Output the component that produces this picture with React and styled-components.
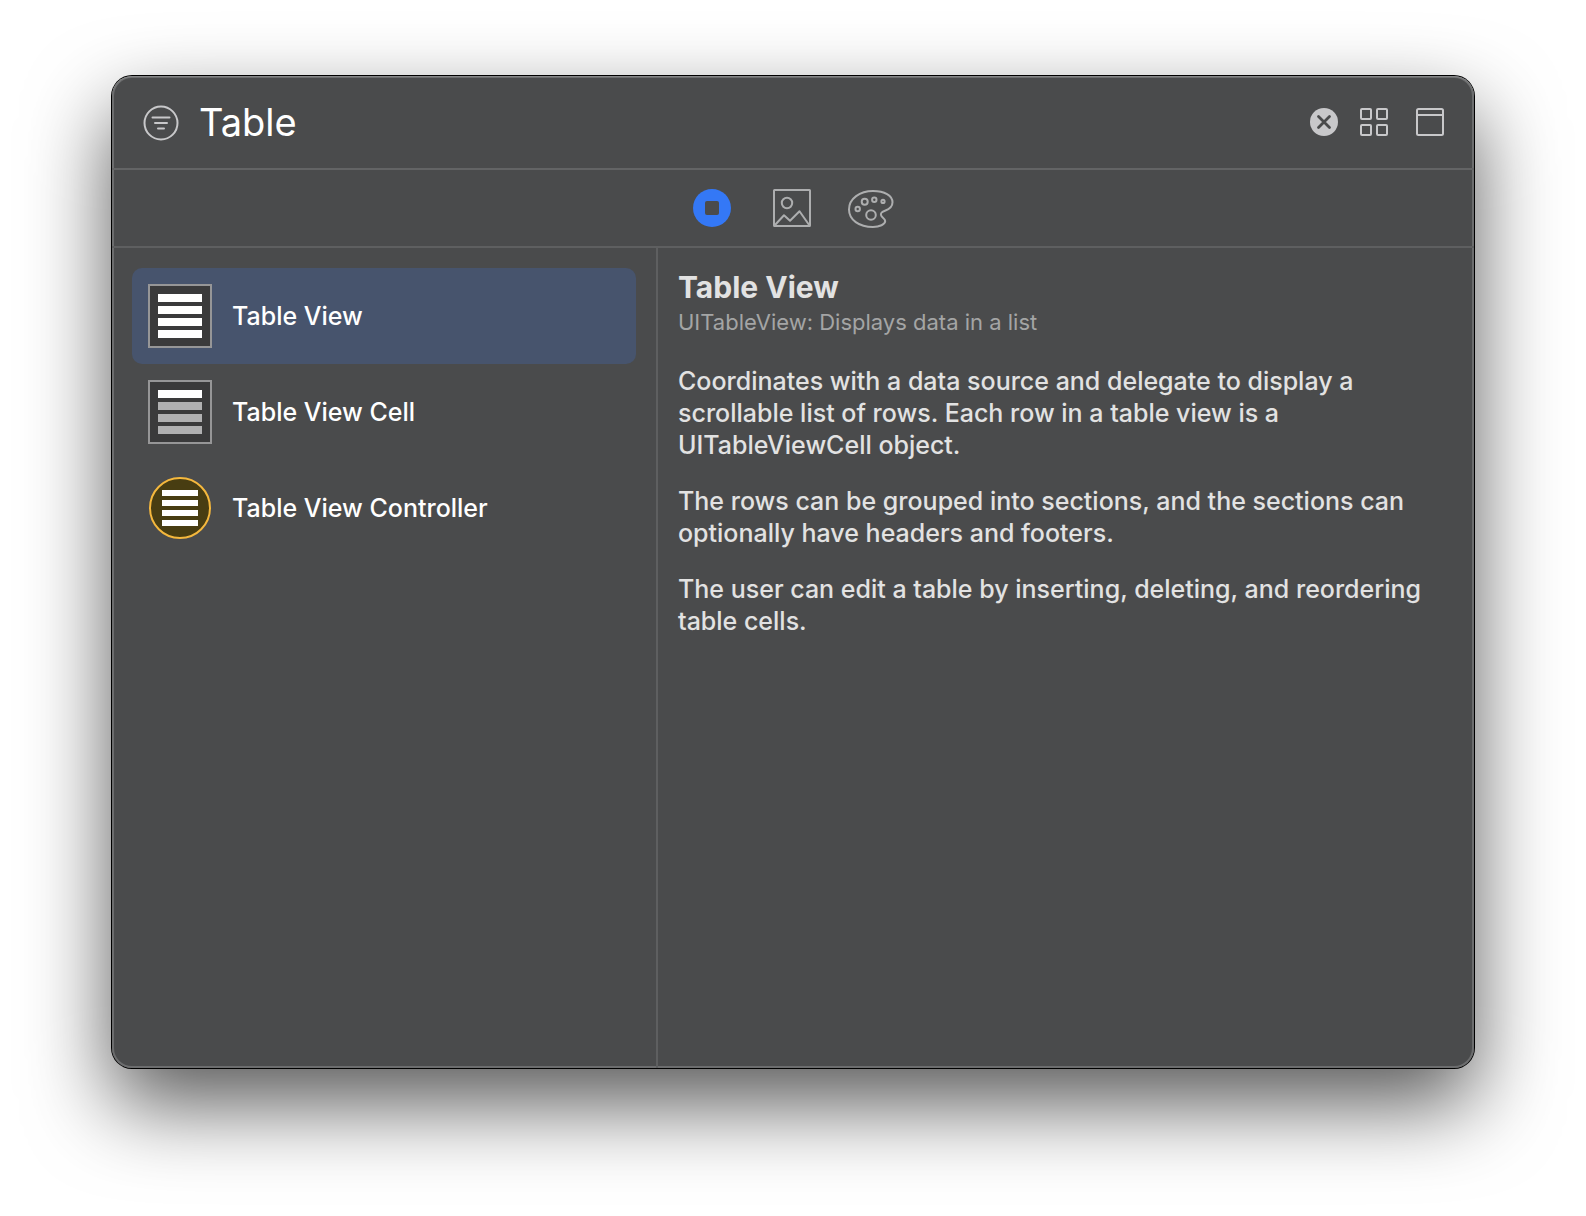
import React, { useState } from 'react';
import styled, { createGlobalStyle } from 'styled-components';

const GlobalStyle = createGlobalStyle`
  * {
    box-sizing: border-box;
  }

  body {
    margin: 0;
    background: #fff;
    font-family: Inter, 'Liberation Sans', sans-serif;
  }
`;

const Desktop = styled.div`
  display: flex;
  min-height: 100vh;
  padding: 76px 112px 148px;
  overflow: hidden;
`;

const Window = styled.main`
  flex: 1;
  min-width: 0;
  display: flex;
  flex-direction: column;
  background: #4a4b4c;
  border-radius: 20px;
  box-shadow:
    inset 0 1px 0 #858687,
    inset 0 0 0 2px #6c6d6e,
    0 0 0 1px #000,
    0 36px 84px rgba(0, 0, 0, 0.66);
`;

const SearchBar = styled.header`
  display: flex;
  align-items: center;
  height: 94px;
  padding: 0 30px 0 31px;
  border-bottom: 2px solid #636465;
`;

const IconButton = styled.button`
  display: flex;
  align-items: center;
  justify-content: center;
  flex: none;
  padding: 0;
  border: none;
  background: none;
  color: ${props => props.$color || '#c8c8ca'};
  cursor: pointer;
`;

const SearchInput = styled.input`
  flex: 1;
  min-width: 0;
  margin: 0 20px;
  padding: 0;
  border: none;
  outline: none;
  background: none;
  color: #fff;
  font-family: inherit;
  font-size: 38px;
  line-height: 48px;
`;

const SearchActions = styled.div`
  display: flex;
  align-items: center;
  gap: 22px;
`;

const ViewActions = styled.div`
  display: flex;
  gap: 28px;
`;

const LibraryTabs = styled.nav`
  display: flex;
  align-items: center;
  justify-content: center;
  gap: 32px;
  height: 78px;
  padding-right: 2px;
  border-bottom: 2px solid #5e5f60;
`;

const LibraryTab = styled(IconButton)`
  width: 48px;
  height: 48px;
`;

const Content = styled.div`
  flex: 1;
  display: grid;
  grid-template-columns: 546px 1fr;
`;

const ObjectList = styled.ul`
  margin: 0;
  padding: 20px;
  border-right: 2px solid #5e5f60;
  list-style: none;
`;

const ObjectRow = styled.button`
  display: flex;
  align-items: center;
  gap: 20px;
  width: 100%;
  height: 96px;
  padding: 0 16px;
  border: none;
  border-radius: 10px;
  background: ${props => (props.$selected ? '#47546d' : 'transparent')};
  color: #fff;
  font-family: inherit;
  font-size: 25px;
  font-weight: 500;
  text-align: left;
  cursor: pointer;
`;

const Details = styled.article`
  padding: 21px 20px;
  color: #e2e2e2;
`;

const DetailsTitle = styled.h1`
  margin: 0;
  font-size: 30px;
  font-weight: 700;
  line-height: 36px;
`;

const DetailsSubtitle = styled.p`
  margin: 0 0 26px;
  color: #a4a5a5;
  font-size: 22px;
  line-height: 34px;
`;

const Paragraph = styled.p`
  margin: 0 0 24px;
  font-size: 25px;
  font-weight: 500;
  line-height: 32px;
`;

function FilterIcon() {
  return (
    <svg width="36" height="38" viewBox="0 -2 36 38" fill="none" stroke="currentColor" strokeWidth="2" strokeLinecap="round">
      <circle cx="18" cy="18" r="16.5" />
      <path d="M9.5 12.5h17M12 18h12M15 23.5h6" />
    </svg>
  );
}

function ClearIcon() {
  return (
    <svg width="28" height="28" viewBox="0 0 28 28">
      <circle cx="14" cy="14" r="14" fill="currentColor" />
      <path d="M8.5 8.5l11 11M19.5 8.5l-11 11" stroke="#4a4b4c" strokeWidth="2.8" strokeLinecap="round" />
    </svg>
  );
}

function GridIcon() {
  return (
    <svg width="28" height="28" viewBox="0 0 28 28" fill="none" stroke="currentColor" strokeWidth="2">
      <rect x="1" y="1" width="10" height="10" rx="1" />
      <rect x="17" y="1" width="10" height="10" rx="1" />
      <rect x="1" y="17" width="10" height="10" rx="1" />
      <rect x="17" y="17" width="10" height="10" rx="1" />
    </svg>
  );
}

function PanelIcon() {
  return (
    <svg width="28" height="28" viewBox="0 0 28 28" fill="none" stroke="currentColor" strokeWidth="2">
      <rect x="1" y="1" width="26" height="26" rx="1.5" />
      <path d="M1 7h26" />
    </svg>
  );
}

function ObjectsIcon() {
  return (
    <svg width="38" height="38" viewBox="0 0 38 38">
      <circle cx="19" cy="19" r="19" fill="currentColor" />
      <rect x="12" y="12" width="14" height="14" rx="2" fill="#4a4b4c" />
    </svg>
  );
}

function MediaIcon() {
  return (
    <svg width="38" height="38" viewBox="0 0 38 38" fill="none" stroke="currentColor" strokeWidth="2" strokeLinejoin="round">
      <rect x="1" y="1" width="36" height="36" rx="0.5" />
      <circle cx="14" cy="14" r="5.2" />
      <path d="M1.5 36.5L11 26.2l6 5.6 9.500-9.600 10 14.300" />
    </svg>
  );
}

function ColorsIcon() {
  return (
    <svg width="48" height="40" viewBox="0 -2 48 40" fill="none" stroke="currentColor" strokeWidth="2">
      <path d="M25 1C36.500 1 44.500 5.500 44.500 12.300c0 4.700-3 6.700-7 8.200-3.600 1.400-5.500 2.600-4.300 5.200 1 2.200 4 2.800 4 5.300 0 3.400-5.700 6-12.200 6C11 37 1 29.800 1 19.500 1 8.500 12 1 25 1z" />
      <circle cx="23" cy="25" r="4.800" />
      <circle cx="9.700" cy="19" r="2.200" />
      <circle cx="16.700" cy="11.800" r="3" />
      <circle cx="26.300" cy="9.700" r="2.200" />
      <circle cx="35" cy="11.400" r="1.600" />
    </svg>
  );
}

function TableIcon({ rowColor = '#fff' }) {
  return (
    <svg width="64" height="64" viewBox="0 0 64 64">
      <rect x="1" y="1" width="62" height="62" fill="#3a3a3b" stroke="#969697" strokeWidth="2" />
      <rect x="10" y="10" width="44" height="8" fill="#fff" />
      {[22, 34, 46].map(y => (
        <rect key={y} x="10" y={y} width="44" height="8" fill={rowColor} />
      ))}
    </svg>
  );
}

function ControllerIcon() {
  return (
    <svg width="64" height="64" viewBox="0 0 64 64">
      <circle cx="32" cy="32" r="30" fill="#483d12" stroke="#f5b83d" strokeWidth="2" />
      {[14, 24, 34, 44].map(y => (
        <rect key={y} x="14" y={y} width="36" height="6" fill="#fff" />
      ))}
    </svg>
  );
}

const objects = [
  { name: 'Table View', icon: <TableIcon /> },
  { name: 'Table View Cell', icon: <TableIcon rowColor="#b0b0b1" /> },
  { name: 'Table View Controller', icon: <ControllerIcon /> },
];

const tabs = [
  { name: 'Objects', icon: <ObjectsIcon /> },
  { name: 'Media', icon: <MediaIcon /> },
  { name: 'Colors', icon: <ColorsIcon /> },
];

function App() {
  const [query, setQuery] = useState('Table');
  const [tab, setTab] = useState('Objects');
  const [selected, setSelected] = useState('Table View');

  return (
    <Desktop>
      <GlobalStyle />
      <Window>
        <SearchBar>
          <IconButton aria-label="Filter">
            <FilterIcon />
          </IconButton>
          <SearchInput
            aria-label="Search objects"
            value={query}
            onChange={e => setQuery(e.target.value)}
          />
          <SearchActions>
            <IconButton aria-label="Clear search" onClick={() => setQuery('')}>
              <ClearIcon />
            </IconButton>
            <ViewActions>
              <IconButton aria-label="Icon view">
                <GridIcon />
              </IconButton>
              <IconButton aria-label="Toggle details">
                <PanelIcon />
              </IconButton>
            </ViewActions>
          </SearchActions>
        </SearchBar>

        <LibraryTabs>
          {tabs.map(({ name, icon }) => (
            <LibraryTab
              key={name}
              aria-label={name}
              $color={tab === name ? '#3478f6' : '#adaeaf'}
              onClick={() => setTab(name)}
            >
              {icon}
            </LibraryTab>
          ))}
        </LibraryTabs>

        <Content>
          <ObjectList>
            {objects.map(({ name, icon }) => (
              <li key={name}>
                <ObjectRow $selected={selected === name} onClick={() => setSelected(name)}>
                  {icon}
                  {name}
                </ObjectRow>
              </li>
            ))}
          </ObjectList>
          <Details>
            <DetailsTitle>Table View</DetailsTitle>
            <DetailsSubtitle>UITableView: Displays data in a list</DetailsSubtitle>
            <Paragraph>
              Coordinates with a data source and delegate to display a scrollable list of rows. Each row
              in a table view is a UITableViewCell object.
            </Paragraph>
            <Paragraph>
              The rows can be grouped into sections, and the sections can optionally have headers and
              footers.
            </Paragraph>
            <Paragraph>
              The user can edit a table by inserting, deleting, and reordering table cells.
            </Paragraph>
          </Details>
        </Content>
      </Window>
    </Desktop>
  );
}

export default App;
